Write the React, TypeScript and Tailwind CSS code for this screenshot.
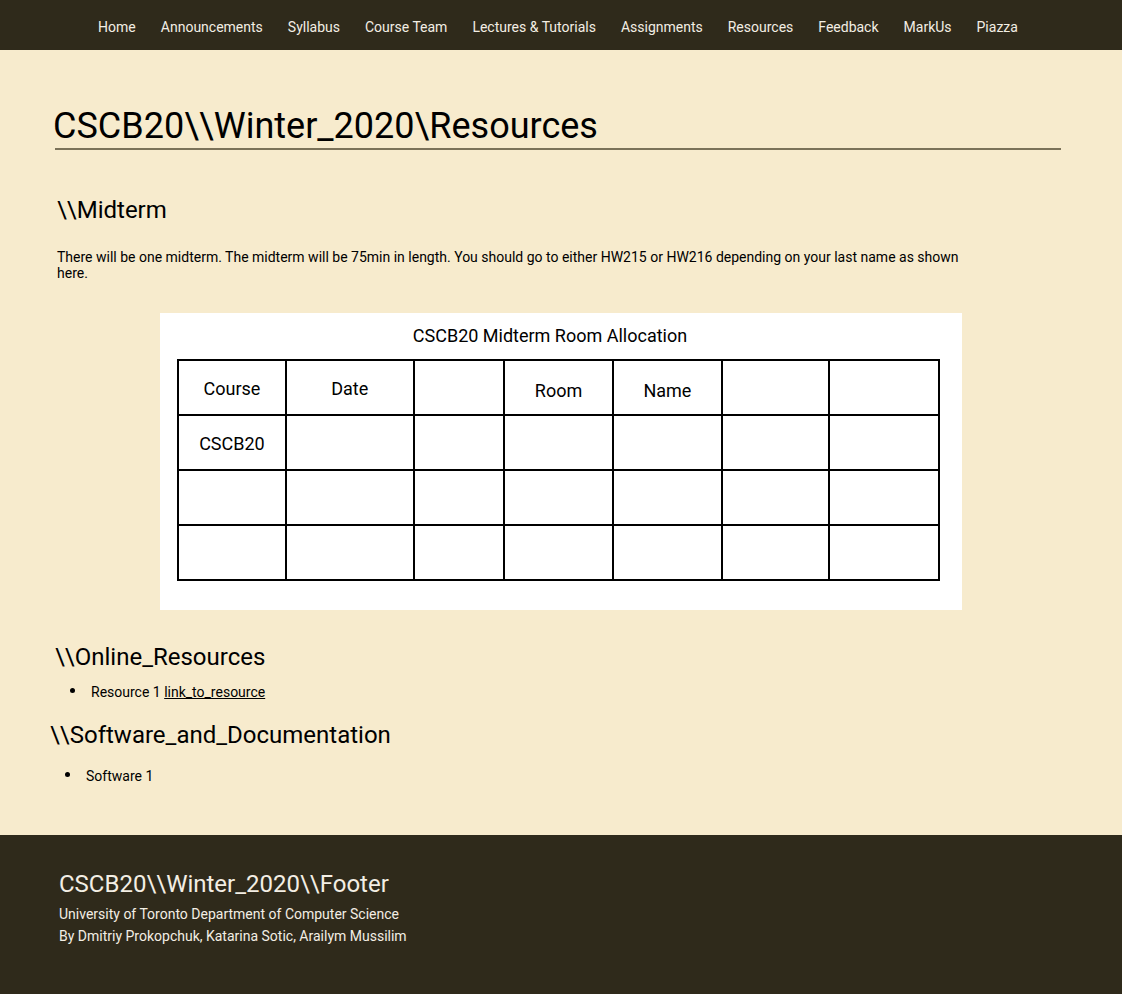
import type { ReactNode } from "react";

const navItems = [
  "Home",
  "Announcements",
  "Syllabus",
  "Course Team",
  "Lectures & Tutorials",
  "Assignments",
  "Resources",
  "Feedback",
  "MarkUs",
  "Piazza",
];

const colWidths = ["w-[108px]", "w-[128px]", "w-[91px]", "w-[109px]", "w-[109px]", "w-[108px]", "w-[110px]"];

function Cell({ children, className = "" }: { children?: ReactNode; className?: string }) {
  return (
    <td className={`h-[55px] border-2 border-black p-0 text-center align-middle text-[18px] ${className}`}>
      {children}
    </td>
  );
}

function Bullet({ children }: { children: ReactNode }) {
  return (
    <li className="flex items-start gap-[16px]">
      <span className="mt-[4px] h-[5px] w-[5px] shrink-0 rounded-full bg-black" />
      <span>{children}</span>
    </li>
  );
}

export default function App() {
  return (
    <div className="min-h-screen bg-[#f7ebcd] font-['Roboto',sans-serif] text-black">
      <nav className="flex h-[50px] items-center justify-center gap-[25px] bg-[#2f2a1b] pr-[6px] pt-[3px] text-[14px] text-[#f3eee4]">
        {navItems.map((item) => (
          <a key={item} href="#" className="leading-none">
            {item}
          </a>
        ))}
      </nav>

      <main className="pb-[51px]">
        <div className="ml-[55px] mr-[61px] mt-[53px] border-b-2 border-[#7b7259]">
          <h1 className="-ml-[2px] pb-[1px] pt-[2px] text-[36px] leading-[42px]">CSCB20\\Winter_2020\Resources</h1>
        </div>

        <h2 className="ml-[57px] mt-[45px] text-[24px] leading-[30px]">\\Midterm</h2>
        <p className="ml-[57px] mt-[24px] w-[910px] text-[14px] leading-[16px]">
          There will be one midterm. The midterm will be 75min in length. You should go to either HW215 or HW216
          depending on your last name as shown here.
        </p>

        <div className="mx-auto mt-[32px] w-[802px] bg-white pb-[29px] pl-[17px] pr-[22px] pt-[12px]">
          <div className="pr-[17px] text-center text-[18px] leading-[22px]">CSCB20 Midterm Room Allocation</div>
          <table className="mt-[12px] border-collapse">
            <tbody>
              <tr>
                <Cell className={colWidths[0]}>
                  <span className="relative top-[1px]">Course</span>
                </Cell>
                <Cell className={colWidths[1]}>
                  <span className="relative top-[1px]">Date</span>
                </Cell>
                <Cell className={colWidths[2]} />
                <Cell className={colWidths[3]}>
                  <span className="relative top-[3px]">Room</span>
                </Cell>
                <Cell className={colWidths[4]}>
                  <span className="relative top-[3px]">Name</span>
                </Cell>
                <Cell className={colWidths[5]} />
                <Cell className={colWidths[6]} />
              </tr>
              <tr>
                <Cell>
                  <span className="relative top-[1px]">CSCB20</span>
                </Cell>
                <Cell />
                <Cell />
                <Cell />
                <Cell />
                <Cell />
                <Cell />
              </tr>
              {[0, 1].map((r) => (
                <tr key={r}>
                  <Cell />
                  <Cell />
                  <Cell />
                  <Cell />
                  <Cell />
                  <Cell />
                  <Cell />
                </tr>
              ))}
            </tbody>
          </table>
        </div>

        <h2 className="ml-[55px] mt-[32px] text-[24px] leading-[30px]">\\Online_Resources</h2>
        <ul className="ml-[70px] mt-[12px] text-[14px] leading-[16px]">
          <Bullet>
            Resource 1{" "}
            <a href="#" className="underline">
              link_to_resource
            </a>
          </Bullet>
        </ul>

        <h2 className="ml-[50px] mt-[20px] text-[24px] leading-[30px]">\\Software_and_Documentation</h2>
        <ul className="ml-[65px] mt-[18px] text-[14px] leading-[16px]">
          <Bullet>Software 1</Bullet>
        </ul>
      </main>

      <footer className="h-[170px] bg-[#2f2a1b] pl-[59px] pt-[35px] text-[#f3eee4]">
        <div className="text-[24px] leading-[28px]">CSCB20\\Winter_2020\\Footer</div>
        <div className="mt-[5px] text-[14px] leading-[22px]">University of Toronto Department of Computer Science</div>
        <div className="text-[14px] leading-[22px]">By Dmitriy Prokopchuk, Katarina Sotic, Arailym Mussilim</div>
      </footer>
    </div>
  );
}
